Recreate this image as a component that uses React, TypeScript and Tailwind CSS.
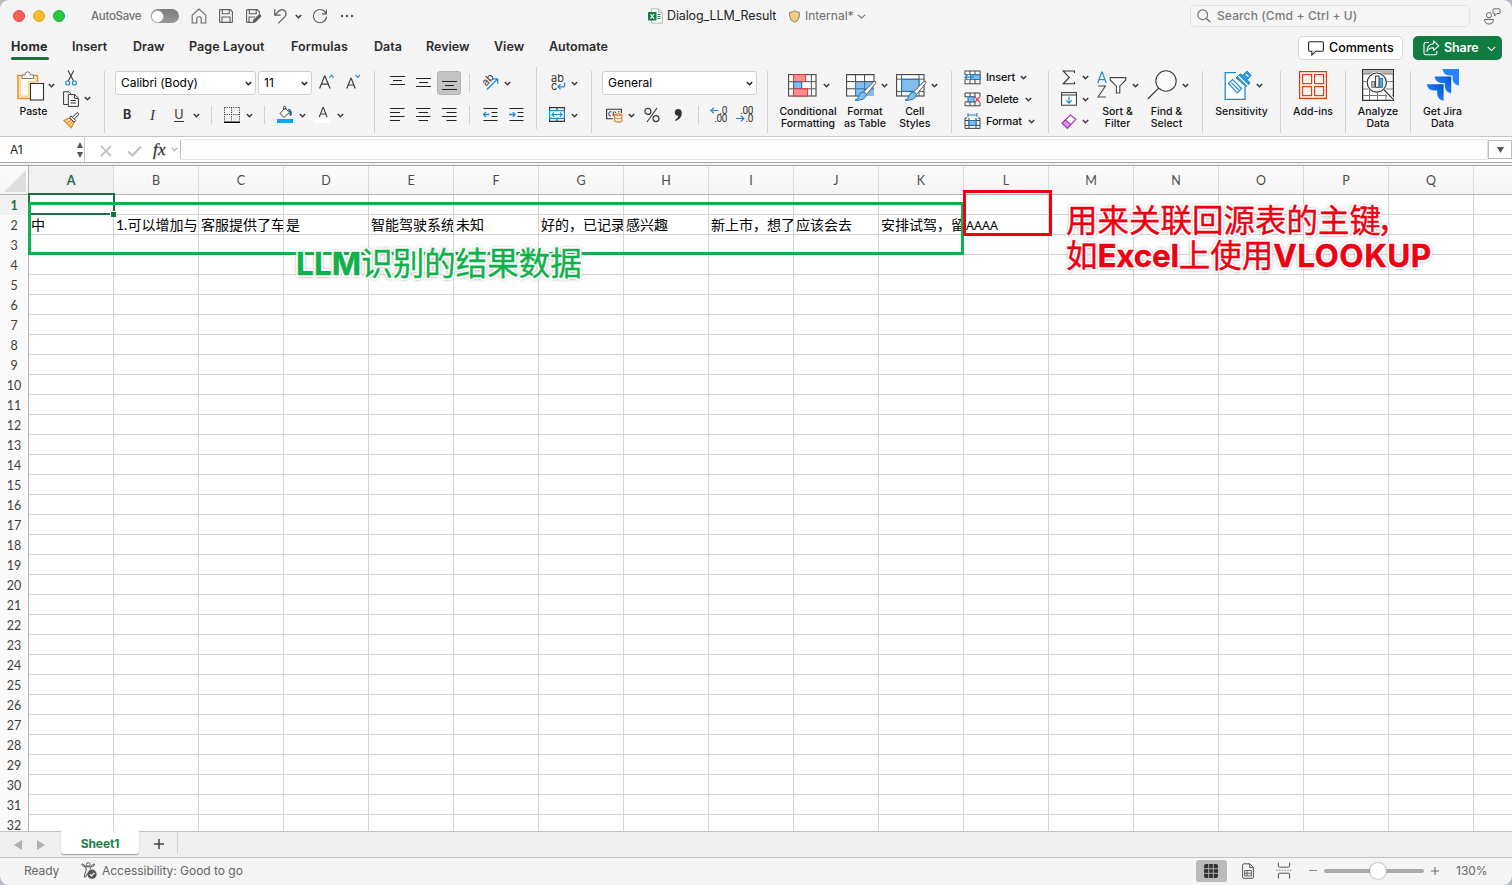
import React from "react";
import type { ReactNode } from "react";

const COLUMNS = "ABCDEFGHIJKLMNOPQ".split("");
const ROW_COUNT = 32;

const RECORD: Record<string, string> = {
  A: "中",
  B: "1.可以增加与",
  C: "客服提供了车",
  D: "是",
  E: "智能驾驶系统",
  F: "未知",
  G: "好的，已记录",
  H: "感兴趣",
  I: "新上市，想了",
  J: "应该会去",
  K: "安排试驾，留",
  L: "AAAA",
};

const INK = "#3b3b3b";
const BLUE = "#1e8ad2";

function Chevron({ className = "", color = "#3a3a3a" }: { className?: string; color?: string }) {
  return (
    <svg className={`shrink-0 ${className}`} width="7" height="5" viewBox="0 0 7 5" fill="none">
      <path d="M0.8 0.9L3.5 3.7L6.2 0.9" stroke={color} strokeWidth="1.5" />
    </svg>
  );
}

function Icon({
  w,
  h,
  className = "",
  children,
}: {
  w: number;
  h: number;
  className?: string;
  children: ReactNode;
}) {
  return (
    <svg
      className={`shrink-0 ${className}`}
      width={w}
      height={h}
      viewBox={`0 0 ${w} ${h}`}
      fill="none"
      stroke={INK}
      strokeWidth="1"
    >
      {children}
    </svg>
  );
}

function Divider({ className = "" }: { className?: string }) {
  return <div className={`w-px shrink-0 bg-[#d0d0d0] ${className}`} />;
}

function TitleBar() {
  return (
    <div className="flex h-8 shrink-0 items-center">
      <div className="ml-[13px] flex gap-2">
        <div className="size-3 rounded-full border border-[#e2463f] bg-[#ff5f57]" />
        <div className="size-3 rounded-full border border-[#e0a020] bg-[#febc2e]" />
        <div className="size-3 rounded-full border border-[#1dac2c] bg-[#28c840]" />
      </div>
      <div className="ml-[26px] w-[60px] pt-px text-[11.5px] font-medium tracking-[-0.32px] whitespace-nowrap text-[#717171]">AutoSave</div>
      <div className="flex h-[14px] w-7 items-center rounded-full bg-gradient-to-b from-[#7d7d7d] to-[#969696]">
        <div className="size-[13px] rounded-full border border-[#aaa] bg-white" />
      </div>
      <Icon w={16} h={16} className="ml-3">
        <path d="M1.2 7.2L8 1L14.8 7.2V15H10.2V10.5Q10.2 8.8 8 8.8Q5.8 8.8 5.8 10.5V15H1.2Z" stroke="#666" strokeWidth="1.1" />
      </Icon>
      <Icon w={14} h={14} className="ml-3">
        <path d="M0.6 1.6Q0.6 0.6 1.6 0.6H11.2L13.4 2.8V12.4Q13.4 13.4 12.4 13.4H1.6Q0.6 13.4 0.6 12.4ZM3.3 0.6V4.8H10.2V0.6M3 13.4V8H11V13.4" stroke="#5c5c5c" strokeWidth="1.1" />
      </Icon>
      <Icon w={16} h={16} className="ml-[13px]">
        <path d="M6 14.4H1.6Q0.6 14.4 0.6 13.4V2.6Q0.6 1.6 1.6 1.6H11.2L13.4 3.8V6M3.3 1.6V5.8H10.2V1.6M3 14.4V9H9" stroke="#5c5c5c" strokeWidth="1.1" />
        <path d="M6.3 15.5L7.2 11.8L12.7 6.4Q14 5.7 15 6.9Q15.7 8 14.9 8.9L9.6 14.3Z" fill="#5c5c5c" stroke="none" />
      </Icon>
      <Icon w={15} h={16} className="ml-[11px]">
        <path d="M1.7 1.2V7.2H7.7M1.9 7L6.2 2.8Q9 0.4 11.8 2.8Q14.3 5.6 11.8 8.8L5.2 15.4" stroke="#5c5c5c" strokeWidth="1.2" />
      </Icon>
      <Chevron className="ml-[7px]" />
      <Icon w={16} h={16} className="ml-[10px]">
        <path d="M14.2 5.8A6.6 6.6 0 1 0 14.6 8.6M14.4 1.6V5.9H10" stroke="#5c5c5c" strokeWidth="1.1" />
      </Icon>
      <Icon w={14} h={4} className="ml-3">
        <circle cx="2" cy="2" r="1.2" fill="#555" stroke="none" />
        <circle cx="7" cy="2" r="1.2" fill="#555" stroke="none" />
        <circle cx="12" cy="2" r="1.2" fill="#555" stroke="none" />
      </Icon>

      <Icon w={15} h={16} className="ml-[294px]">
        <path d="M3.5 0.8H10.5L14.3 4.6V15.2H3.5Z" fill="#fff" stroke="#b5b5b5" />
        <path d="M10.5 0.8V4.6H14.3" stroke="#b5b5b5" />
        <path d="M9.5 6.5H12.5M9.5 8.5H12.5M9.5 10.5H12.5" stroke="#1f9254" strokeWidth="1.2" />
        <rect x="0" y="4" width="8.5" height="8.5" rx="0.8" fill="#107c41" stroke="none" />
        <path d="M2.4 6L6 10.6M6 6L2.4 10.6" stroke="#fff" strokeWidth="1.2" />
      </Icon>
      <div className="ml-[4px] w-[122px] text-[12.5px] tracking-[-0.12px] whitespace-nowrap text-[#222]">Dialog_LLM_Result</div>
      <Icon w={11} h={13}>
        <path d="M5.5 0.8Q7.5 2.3 10.3 2.3V6.2Q10.3 10.2 5.5 12.3Q0.7 10.2 0.7 6.2V2.3Q3.5 2.3 5.5 0.8Z" fill="#f0cd86" stroke="#8b7d61" />
      </Icon>
      <div className="ml-[5px] w-[51.5px] text-[12px] whitespace-nowrap text-[#6b6b6b]">Internal*</div>
      <Icon w={9} h={5}>
        <path d="M0.8 0.8L4.5 4L8.2 0.8" stroke="#777" strokeWidth="1.1" />
      </Icon>

      <div className="ml-auto flex h-[22px] w-[280px] items-center rounded-[5px] border border-[#e2e2e2] bg-[#f6f6f6]">
        <Icon w={14} h={14} className="ml-[6px]">
          <circle cx="5.7" cy="5.7" r="4.9" stroke="#777" strokeWidth="1.2" />
          <path d="M9.3 9.3L13.3 13.3" stroke="#777" strokeWidth="1.5" />
        </Icon>
        <div className="ml-[6px] text-[12px] font-medium tracking-[0.12px] text-[#7b7b7b]">Search (Cmd + Ctrl + U)</div>
      </div>
      <Icon w={17} h={17} className="mr-[11px] ml-[14px]">
        <circle cx="5" cy="7.2" r="2.6" stroke="#666" />
        <path d="M0.6 11.5H9.4Q9.4 16 5 16Q0.6 16 0.6 11.5Z" stroke="#666" strokeLinejoin="round" />
        <path d="M9 1.6Q9 0.8 9.8 0.8H15.2Q16 0.8 16 1.6V4.7Q16 5.5 15.2 5.5H13L10.6 8V5.5H9.8Q9 5.5 9 4.7Z" stroke="#666" />
      </Icon>
    </div>
  );
}

function MenuTabs() {
  return (
    <div className="flex h-8 shrink-0 text-[12.5px] font-semibold text-[#2b2b2b]">
      <div className="ml-[11px] flex w-[61px] flex-col font-bold">
        <div className="mt-[5px] h-[20px] leading-[20px] tracking-[0.2px]">Home</div>
        <div className="h-[3px] w-[38px] rounded-full bg-[#1d6f42]" />
      </div>
      <div className="flex pt-[5px] leading-[20px] tracking-[0.02px] whitespace-nowrap">
        <div className="w-[61px]">Insert</div>
        <div className="w-[56px]">Draw</div>
        <div className="w-[102px] tracking-[0.12px]">Page Layout</div>
        <div className="w-[83px] tracking-[0.15px]">Formulas</div>
        <div className="w-[52px]">Data</div>
        <div className="w-[68px]">Review</div>
        <div className="w-[55px]">View</div>
        <div>Automate</div>
      </div>
      <div className="mt-[4px] ml-auto flex h-6 w-[105px] items-center rounded-[5px] border border-[#d8d8d8] bg-white font-medium text-black">
        <Icon w={16} h={15} className="ml-[9px]">
          <path d="M1.8 0.8H14.2Q15.4 0.8 15.4 2V9Q15.4 10.2 14.2 10.2H7.8L3.8 14V10.2H1.8Q0.6 10.2 0.6 9V2Q0.6 0.8 1.8 0.8Z" stroke="#222" strokeWidth="1.1" />
        </Icon>
        <div className="ml-[5px] pt-px">Comments</div>
      </div>
      <div className="mt-[4px] mr-[10px] ml-[10px] flex h-6 w-[89px] items-center rounded-[5px] bg-[#107c41] text-white">
        <Icon w={17} h={16} className="ml-[10px]">
          <path d="M6 2.5H2.8Q1 2.5 1 4.3V13Q1 14.8 2.8 14.8H12Q13.8 14.8 13.8 13V11" stroke="#fff" strokeWidth="1.1" />
          <path d="M10.6 1L15.8 5.8L10.6 10.4V7.8Q6 7.6 4 11.4Q4.2 4.2 10.6 3.8Z" stroke="#fff" strokeWidth="1.1" strokeLinejoin="round" />
        </Icon>
        <div className="ml-[4px] w-[43px] pt-px tracking-[-0.1px]">Share</div>
        <Icon w={9} h={6} className="mt-px">
          <path d="M0.8 1L4.5 4.6L8.2 1" stroke="#fff" strokeWidth="1.1" />
        </Icon>
      </div>
    </div>
  );
}

function ClipboardGroup() {
  return (
    <div className="flex w-[104px] shrink-0">
      <div className="ml-[17px] flex w-[46px] flex-col pt-[7px]">
        <div className="flex items-center">
          <Icon w={28} h={30}>
            <path d="M6 4.5H1V27.5H13" stroke="#e8912d" strokeWidth="1.6" />
            <path d="M14.5 4.5H20.5V11" stroke="#e8912d" strokeWidth="1.6" />
            <path d="M3 6.5V25.5H12V11H18.5V6.5" fill="#fbfbf6" stroke="#fbd99a" strokeWidth="2" />
            <path d="M5 7.5V4H8Q8 0.8 10.7 0.8Q13.4 0.8 13.4 4H16.5V7.5Z" fill="#fff" stroke="#777" />
            <rect x="13.5" y="12.5" width="13" height="16.5" fill="#fff" stroke="#333" strokeWidth="1.1" />
          </Icon>
          <Chevron className="-mt-[2px] ml-[3px]" />
        </div>
        <div className="mt-[4px] ml-[2.5px] text-[10.5px] leading-[14px] font-medium tracking-[-0.02px] text-[#111]">Paste</div>
      </div>
      <div className="flex flex-col pt-[6px]">
        <Icon w={16} h={16}>
          <path d="M5 0.5L10.6 11M10.8 0.5L5.2 11" strokeWidth="1.1" />
          <circle cx="4.6" cy="13" r="2" stroke={BLUE} strokeWidth="1.2" />
          <circle cx="11.4" cy="13" r="2" stroke={BLUE} strokeWidth="1.2" />
        </Icon>
        <div className="mt-[4px] flex h-[17px] items-center">
          <Icon w={16} h={16}>
            <path d="M4.8 13.5H0.6V0.8H6L8.2 3" stroke="#333" />
            <path d="M5.3 3.6H11.8L15.4 7.2V15.4H5.3Z" fill="#fff" stroke="#333" />
            <path d="M11.6 3.6V7.4H15.4M7.6 9.5H13M7.6 12H13" stroke="#333" />
          </Icon>
          <Chevron className="ml-[5px]" />
        </div>
        <Icon w={17} h={17} className="mt-[5px]">
          <path d="M1 8.5L6.8 5.8L11 10.2L8.3 15.6Z" fill="#fbdcae" stroke="#e8821e" strokeWidth="1.3" />
          <path d="M4 11L8 8.5M6.3 13L9.5 9.5" stroke="#e8821e" strokeWidth="0.9" />
          <path d="M6.8 5.8L8.2 3.9L12.6 8.4L11 10.2Z" fill="#fff" stroke="#333" />
          <path d="M9.7 4.8L13.9 0.9Q15.2 0.5 15.6 1.7Q15.9 2.6 15.2 3L11.4 6.8" fill="#fff" stroke="#333" />
        </Icon>
      </div>
    </div>
  );
}

function FontGroup() {
  return (
    <div className="flex w-[269px] shrink-0 flex-col pt-[3px]">
      <div className="flex h-8 items-center">
        <div className="ml-[10px] flex h-6 w-[141px] items-center rounded-[3px] border border-[#d0d0d0] bg-white">
          <div className="ml-[5px] w-[124px] text-[12px] tracking-[-0.05px] text-black">Calibri (Body)</div>
          <Chevron color="#222" />
        </div>
        <div className="ml-[2px] flex h-6 w-[54px] items-center rounded-[3px] border border-[#d0d0d0] bg-white">
          <div className="ml-[5px] w-[37px] text-[12px] text-black">11</div>
          <Chevron color="#222" />
        </div>
        <Icon w={15} h={16} className="-mt-[2px] ml-[7px]">
          <path d="M0.6 14.5L5.6 2H6L11 14.5M2.4 10.2H9.2" strokeWidth="1.2" />
          <path d="M10.4 3.6L12.6 1.3L14.8 3.6" stroke={BLUE} strokeWidth="1.2" />
        </Icon>
        <Icon w={15} h={16} className="-mt-[2px] ml-[12px]">
          <path d="M0.8 14.5L4.8 4.3H5.2L9.2 14.5M2.2 11H7.8" strokeWidth="1.2" />
          <path d="M9.6 1.2L11.8 3.5L14 1.2" stroke={BLUE} strokeWidth="1.2" />
        </Icon>
      </div>
      <div className="flex h-8 items-center text-[#333]">
        <div className="ml-[18px] w-[26px] text-[12.5px] font-bold">B</div>
        <div className="w-[25px] pl-px font-['Liberation_Serif',serif] text-[15px] italic">I</div>
        <div className="flex w-[19px] flex-col items-start">
          <div className="h-[14px] w-[10px] border-b border-[#333] text-center text-[12.5px] leading-[13px]">U</div>
        </div>
        <Chevron />
        <Divider className="ml-[11px] h-[18px]" />
        <Icon w={16} h={16} className="ml-[12px]">
          <path d="M0.5 0.5H15.5M0.5 7.5H15.5M0.5 0.5V14M7.5 0.5V14M15.5 0.5V14" stroke="#222" strokeDasharray="1 1.2" />
          <path d="M0 15.2H16" stroke="#000" strokeWidth="1.4" />
        </Icon>
        <Chevron className="ml-[6px]" />
        <Divider className="ml-[11px] h-[18px]" />
        <Icon w={16} h={18} className="-mt-[2px] ml-[12px]">
          <path d="M3 8.5L8.2 3L12.3 7.6L7 12.4Z" fill="#fff" stroke="#444" />
          <path d="M6.6 5V2.4Q6.8 0.8 8 1.2Q9 1.6 9 5" stroke="#444" />
          <path d="M11 4.4Q14 4 14.4 7.5Q14.8 10 13.6 10.8Q12.6 10 12.9 7.5" fill="#1b5f9e" stroke="#1b5f9e" strokeWidth="0.8" />
          <rect x="0" y="14" width="16" height="4" fill="#00a9ee" stroke="none" />
        </Icon>
        <Chevron className="ml-[6px]" />
        <Icon w={16} h={18} className="-mt-[2px] ml-[9px]">
          <path d="M4.2 12L8 2.6H8.3L12.1 12M5.5 9H10.8" strokeWidth="1.1" />
          <rect x="0" y="14" width="16" height="4" fill="#fff" stroke="none" />
        </Icon>
        <Chevron className="ml-[6px]" />
      </div>
    </div>
  );
}

function AlignmentGroup() {
  return (
    <div className="flex w-[161px] shrink-0 flex-col pt-[3px]">
      <div className="flex h-8 items-center">
        <Icon w={15} h={14} className="-mt-[2px] ml-[15px]">
          <path d="M0 1.5H15M3 5.5H12M0 9.5H15" stroke="#222" strokeWidth="1.1" />
        </Icon>
        <Icon w={15} h={14} className="-mt-[2px] ml-[11px]">
          <path d="M0 3.5H15M3 7.5H12M0 11.5H15" stroke="#222" strokeWidth="1.1" />
        </Icon>
        <div className="ml-[6px] flex size-6 items-center justify-center rounded-[3px] border border-[#b3b3b3] bg-[#c4c4c4]">
          <Icon w={15} h={14}>
            <path d="M0 5.5H15M3 9.5H12M0 13.5H15" stroke="#222" strokeWidth="1.1" />
          </Icon>
        </div>
        <Divider className="ml-[8px] h-[18px]" />
        <div className="relative ml-[12px] h-[16px] w-[17px]">
          <div className="absolute top-[-2px] left-0 -rotate-45 text-[10.5px] leading-[14px] text-[#333]">ab</div>
          <Icon w={17} h={16} className="absolute inset-0">
            <path d="M5 14.5L15.5 4M10.8 3.8H15.7V8.7" stroke={BLUE} strokeWidth="1.2" />
          </Icon>
        </div>
        <Chevron className="ml-[5px]" />
      </div>
      <div className="flex h-8 items-center">
        <Icon w={15} h={14} className="ml-[15px]">
          <path d="M0 0.5H14.5M0 4.5H10M0 8.5H14.5M0 12.5H10" stroke="#222" strokeWidth="1.1" />
        </Icon>
        <Icon w={15} h={14} className="ml-[11px]">
          <path d="M0 0.5H14.5M2.5 4.5H12M0 8.5H14.5M2.5 12.5H12" stroke="#222" strokeWidth="1.1" />
        </Icon>
        <Icon w={15} h={14} className="ml-[11px]">
          <path d="M0 0.5H14.5M4.5 4.5H14.5M0 8.5H14.5M4.5 12.5H14.5" stroke="#222" strokeWidth="1.1" />
        </Icon>
        <Divider className="ml-[12px] h-[18px]" />
        <Icon w={15} h={14} className="ml-[13px]">
          <path d="M0.5 0.5H14.5M8.5 4.5H14.5M8.5 8.5H14.5M0.5 12.5H14.5" stroke="#222" strokeWidth="1.1" />
          <path d="M0.5 6.5H6.3M2.8 4.1L0.4 6.5L2.8 8.9" stroke={BLUE} strokeWidth="1.3" />
        </Icon>
        <Icon w={15} h={14} className="ml-[11px]">
          <path d="M0.5 0.5H14.5M8.5 4.5H14.5M8.5 8.5H14.5M0.5 12.5H14.5" stroke="#222" strokeWidth="1.1" />
          <path d="M0 6.5H6M3.8 4.1L6.2 6.5L3.8 8.9" stroke={BLUE} strokeWidth="1.3" />
        </Icon>
      </div>
    </div>
  );
}

function WrapGroup() {
  return (
    <div className="flex w-[54px] shrink-0 flex-col pt-[3px]">
      <div className="flex h-8 items-center">
        <div className="relative ml-[14px] h-[18px] w-[15px] text-[11px] text-[#333]">
          <div className="h-[8px] leading-[8px]">ab</div>
          <div className="h-[8px] leading-[8px]">c</div>
          <Icon w={9} h={9} className="absolute top-[8px] left-[6px]">
            <path d="M7.7 0.5V3.5Q7.7 4.8 6.4 4.8H1M3.6 2.2L1 4.8L3.6 7.4" stroke={BLUE} strokeWidth="1.2" />
          </Icon>
        </div>
        <Chevron className="ml-[5px]" />
      </div>
      <div className="flex h-8 items-center">
        <Icon w={16} h={15} className="-mt-px ml-[12px]">
          <path d="M0.6 4V0.6H15.4V4M0.6 11V14.4H15.4V11M8 0.6V3.5M8 11.5V14.4" stroke="#333" strokeWidth="1.1" />
          <rect x="0.6" y="3.6" width="14.8" height="7.8" fill="#eef7fd" stroke={BLUE} strokeWidth="1.2" />
          <path d="M3 7.5H13M5 5.4L2.9 7.5L5 9.6M11 5.4L13.1 7.5L11 9.6" stroke={BLUE} strokeWidth="1.1" />
        </Icon>
        <Chevron className="ml-[6px]" />
      </div>
    </div>
  );
}

function NumberGroup() {
  return (
    <div className="flex w-[175px] shrink-0 flex-col pt-[3px]">
      <div className="flex h-8 items-center">
        <div className="ml-[10px] flex h-6 w-[155px] items-center rounded-[3px] border border-[#d0d0d0] bg-white">
          <div className="ml-[5px] w-[138px] text-[12px] text-black">General</div>
          <Chevron color="#222" />
        </div>
      </div>
      <div className="flex h-8 items-center">
        <Icon w={17} h={15} className="mt-px ml-[14px]">
          <path d="M7 10.8H0.6V1.2H15.4V5" stroke="#333" strokeWidth="1.1" />
          <path d="M5.6 3.8H4Q2.8 3.8 2.8 5.8Q2.8 8 4 8H5M7.2 8V5Q7.2 3.8 8.5 3.8Q9.8 3.8 9.8 5M12 3.8H13.4" stroke="#333" />
          <path d="M8.6 6.6Q12.2 5 15.9 6.6V13Q12.2 15.4 8.6 13Z" fill="#fff" stroke="#ed7d31" strokeWidth="1.2" />
          <path d="M8.6 7Q12.2 8.8 15.9 7M8.6 10Q12.2 11.8 15.9 10" stroke="#ed7d31" />
        </Icon>
        <Chevron className="ml-[5px]" />
        <Icon w={16} h={16} className="ml-[9px]">
          <circle cx="3.9" cy="4.4" r="3" strokeWidth="1.2" />
          <circle cx="12" cy="11.6" r="3" strokeWidth="1.2" />
          <path d="M13 1L3 15" strokeWidth="1.2" />
        </Icon>
        <Icon w={9} h={14} className="ml-[14px]">
          <path d="M4 1Q7.8 1 7.8 5Q7.8 10.5 1.6 13L1 12Q4.2 10.3 4.6 7.6Q1 8 0.8 4.4Q1 1.2 4 1Z" fill="#333" stroke="none" />
        </Icon>
        <Divider className="ml-[15px] h-[18px]" />
        <div className="relative ml-[11px] h-[16px] w-[17px] text-right font-['Roboto',sans-serif] text-[10px] leading-[8px] tracking-[-0.4px] text-[#333]">
          <div>.0</div>
          <div>.00</div>
          <Icon w={9} h={7} className="absolute top-0 left-0">
            <path d="M1 3.5H8.5M3.8 0.8L1 3.5L3.8 6.2" stroke={BLUE} strokeWidth="1.2" />
          </Icon>
        </div>
        <div className="relative ml-[9px] h-[16px] w-[17px] text-right font-['Roboto',sans-serif] text-[10px] leading-[8px] tracking-[-0.4px] text-[#333]">
          <div>.00</div>
          <div>.0</div>
          <Icon w={9} h={7} className="absolute top-[8px] left-0">
            <path d="M0 3.5H7.8M5 0.8L7.8 3.5L5 6.2" stroke={BLUE} strokeWidth="1.2" />
          </Icon>
        </div>
      </div>
    </div>
  );
}

function BigButton({
  className,
  iconRow,
  lines,
}: {
  className: string;
  iconRow: ReactNode;
  lines: string[];
}) {
  return (
    <div className={`flex shrink-0 flex-col items-center ${className}`}>
      <div className="flex h-[42px] items-center">{iconRow}</div>
      <div className="text-center text-[10.5px] leading-[12px] font-medium tracking-[0.02px] whitespace-nowrap text-[#111]">
        {lines.map((line) => (
          <div key={line}>{line}</div>
        ))}
      </div>
    </div>
  );
}

function StylesGroup() {
  const brush = (
    <>
      <path d="M29.2 7.2Q30.6 8 29.8 9.2L20.4 20.6L17.4 18L28 7.4Z" fill="#fff" stroke="#555" />
      <path d="M17.2 18Q20 18.4 20.4 20.8Q19.6 26.4 9 26.4Q12.4 25 13 21.6Q14 18.2 17.2 18Z" fill="#83bdec" stroke="#1f75bd" />
    </>
  );
  return (
    <div className="flex w-[183px] shrink-0">
      <BigButton
        className="ml-[7.5px] w-[65px]"
        lines={["Conditional", "Formatting"]}
        iconRow={
          <>
            <Icon w={29} h={23} className="ml-[2px]">
              <rect x="0.6" y="0.6" width="27.4" height="21.4" fill="#fff" stroke="#444" strokeWidth="1.1" />
              <path d="M0.6 7.6H28M0.6 14.8H28M5.6 0.6V22M13.6 7V15M23.4 0.6V22" stroke="#555" />
              <rect x="5.6" y="0.6" width="12" height="7" fill="#ff8f95" stroke="#e23a3a" strokeWidth="1.1" />
              <rect x="5.6" y="7.8" width="8" height="6.8" fill="#83bdec" stroke="#1f75bd" strokeWidth="1.1" />
              <rect x="5.6" y="14.8" width="14" height="7.2" fill="#ff8f95" stroke="#e23a3a" strokeWidth="1.1" />
            </Icon>
            <Chevron className="ml-[6px]" />
          </>
        }
      />
      <BigButton
        className="w-[49px]"
        lines={["Format", "as Table"]}
        iconRow={
          <>
            <Icon w={31} h={28} className="mt-[5px] ml-[3px]">
              <rect x="0.6" y="0.6" width="27.4" height="21.4" fill="#fff" stroke="none" />
              <rect x="9.6" y="7.6" width="18.4" height="14.4" fill="#83bdec" stroke="none" />
              <path d="M0.6 7.6H28M0.6 14.8H9.6M9.6 0.6V7.6M18.6 0.6V7.6" stroke="#444" />
              <path d="M9.6 14.8H28M18.6 7.6V22M9.6 7.6V22" stroke="#1f75bd" />
              <path d="M28 9V0.6H0.6V22H12" stroke="#444" strokeWidth="1.1" />
              {brush}
            </Icon>
            <Chevron className="ml-[4px]" />
          </>
        }
      />
      <BigButton
        className="w-[50.5px]"
        lines={["Cell", "Styles"]}
        iconRow={
          <>
            <Icon w={31} h={28} className="mt-[5px] ml-[4px]">
              <rect x="0.6" y="0.6" width="27.4" height="21.4" fill="#fff" stroke="#444" strokeWidth="1.1" />
              <path d="M0.6 5.2H28M5.6 0.6V22M23 0.6V22M0.6 17.6H28" stroke="#555" />
              <rect x="5.6" y="5.4" width="17.4" height="12" fill="#83bdec" stroke="#1f75bd" strokeWidth="1.1" />
              {brush}
            </Icon>
            <Chevron className="ml-[4px]" />
          </>
        }
      />
    </div>
  );
}

function CellsGroup() {
  const label = "ml-[5px] text-[11px] font-medium tracking-[-0.18px] text-[#111]";
  return (
    <div className="flex w-[96px] shrink-0 flex-col pt-[2px] pl-[12px]">
      <div className="flex h-[22px] items-center">
        <Icon w={17} h={15}>
          <rect x="1" y="1" width="15" height="12.8" fill="#fff" stroke="#444" />
          <path d="M6 1V5M11 1V14M6 9.5V14M1 9.5H16M1 4.8H16" stroke="#444" />
          <rect x="6.5" y="4.8" width="9.5" height="4.8" fill="#83bdec" stroke="#1f75bd" />
          <rect x="0" y="5" width="6" height="4.4" fill="#f5f5f5" stroke="none" />
          <path d="M1 7.2H10M3.8 4.4L1 7.2L3.8 10" stroke={BLUE} strokeWidth="1.3" />
        </Icon>
        <div className={label}>Insert</div>
        <Chevron className="ml-[5px]" />
      </div>
      <div className="flex h-[22px] items-center">
        <Icon w={17} h={15}>
          <path d="M1 5V1H16V4.5M1 10V13.8H16V10.5M6 1V5M11 1V5M6 10V14M11 10V14M1 4.8H11M1 9.8H11" stroke="#444" />
          <rect x="4" y="4.8" width="6" height="5" fill="#83bdec" stroke="#1f75bd" />
          <path d="M10.8 4.6L15.8 10.4M15.8 4.6L10.8 10.4" stroke="#e03a3a" strokeWidth="1.3" />
        </Icon>
        <div className={label}>Delete</div>
        <Chevron className="ml-[6px]" />
      </div>
      <div className="flex h-[22px] items-center">
        <Icon w={17} h={16}>
          <path d="M4 0V4M13 0V4M4 2H13" stroke={BLUE} strokeWidth="1.1" />
          <path d="M3 5H1V15.4H16V5H14M1 7.5H16M1 12.4H16M5 5V15.4M12 5V15.4" stroke="#444" />
          <rect x="5" y="7.5" width="7" height="4.9" fill="#83bdec" stroke="#1f75bd" />
        </Icon>
        <div className={label}>Format</div>
        <Chevron className="ml-[6px]" />
      </div>
    </div>
  );
}

function EditingGroup() {
  return (
    <div className="flex w-[153px] shrink-0">
      <div className="flex w-[43px] flex-col pt-[2px] pl-[12px]">
        <div className="flex h-[22px] items-center">
          <Icon w={16} h={15}>
            <path d="M13.5 3V1H2.2L8.2 7.4L2.2 13.8H13.5V11.8" stroke="#333" strokeWidth="1.1" />
          </Icon>
          <Chevron className="ml-[5px]" />
        </div>
        <div className="flex h-[22px] items-center">
          <Icon w={16} h={14}>
            <rect x="0.6" y="0.6" width="14.8" height="12.6" fill="#fff" stroke="#333" />
            <path d="M0.6 3H15.4" stroke="#333" />
            <path d="M8 4.5V11M5.2 8.4L8 11.2L10.8 8.4" stroke={BLUE} strokeWidth="1.2" />
          </Icon>
          <Chevron className="ml-[5px]" />
        </div>
        <div className="flex h-[22px] items-center">
          <Icon w={16} h={15}>
            <path d="M1.2 9.2L9.4 1L14.8 5.4L6.4 14.2Z" fill="#fff" stroke="#9b3bb0" strokeWidth="1.2" />
            <path d="M1.2 9.2L4.4 6L9.8 10.6L6.4 14.2Z" fill="#d79be3" stroke="#9b3bb0" strokeWidth="1.1" />
          </Icon>
          <Chevron className="ml-[5px]" />
        </div>
      </div>
      <BigButton
        className="w-[51px]"
        lines={["Sort &", "Filter"]}
        iconRow={
          <>
            <Icon w={30} h={28} className="ml-[1px]">
              <path d="M0.8 12L4.8 1H5.2L9.2 12M2.2 8.6H7.8" stroke={BLUE} strokeWidth="1.2" />
              <path d="M1.2 15H8.4L1 26H8.8" stroke="#444" strokeWidth="1.1" />
              <path d="M13.2 6.6H28.8V9L22.8 15.2V22H19.4V15.2L13.2 9Z" fill="#fff" stroke="#444" strokeWidth="1.1" />
            </Icon>
            <Chevron className="ml-[5px]" />
          </>
        }
      />
      <BigButton
        className="w-[47px]"
        lines={["Find &", "Select"]}
        iconRow={
          <>
            <Icon w={30} h={30} className="ml-[3px]">
              <circle cx="19" cy="11" r="10.2" fill="#fbfbfb" strokeWidth="1.1" />
              <path d="M11.6 18.2L0.8 29" strokeWidth="1.2" />
            </Icon>
            <Chevron className="ml-[5px]" />
          </>
        }
      />
    </div>
  );
}

function Ribbon() {
  const sep = "mt-[7px] h-[62px]";
  return (
    <div className="flex h-[73px] shrink-0 border-b border-[#c6c6c6]">
      <ClipboardGroup />
      <Divider className={sep} />
      <FontGroup />
      <Divider className={sep} />
      <AlignmentGroup />
      <Divider className="mt-[3px] h-[62px]" />
      <WrapGroup />
      <Divider className={sep} />
      <NumberGroup />
      <Divider className={sep} />
      <StylesGroup />
      <Divider className={sep} />
      <CellsGroup />
      <Divider className={sep} />
      <EditingGroup />
      <Divider className={sep} />
      <BigButton
        className="w-[77px]"
        lines={["Sensitivity"]}
        iconRow={
          <>
            <Icon w={28} h={31} className="ml-[3px]">
              <path d="M12 2.6H1.2V29.4H21V16.5" fill="#fff" stroke={BLUE} strokeWidth="1.3" />
              <path d="M4.5 13.5L8.5 9.6L17.6 18.6L13.2 22.8Z" fill="#fff" stroke={BLUE} strokeWidth="1.2" />
              <path d="M7.5 12.6L14.8 20" stroke={BLUE} strokeWidth="1.1" />
              <path d="M12 8L16.2 3.8L18.6 5.4L23 1L27.2 5.4L23 9.8L26.2 13L22.2 16.6Z" fill="#2f97dc" stroke={BLUE} />
              <path d="M14.3 6L24 15.5M21.8 4L24.4 6.6" stroke="#fff" strokeWidth="1.2" />
            </Icon>
            <Chevron className="ml-[4px]" />
          </>
        }
      />
      <Divider className={sep} />
      <BigButton
        className="w-[64px]"
        lines={["Add-ins"]}
        iconRow={
          <Icon w={28} h={28}>
            <rect x="0.6" y="0.6" width="26.8" height="26.8" stroke="#d83b01" strokeWidth="1.2" />
            <rect x="3.6" y="3.6" width="9" height="9" stroke="#d83b01" strokeWidth="1.1" />
            <rect x="15.6" y="3.6" width="9" height="9" stroke="#d83b01" strokeWidth="1.1" />
            <rect x="3.6" y="15.6" width="9" height="9" stroke="#d83b01" strokeWidth="1.1" />
            <rect x="15.6" y="15.6" width="9" height="9" stroke="#d83b01" strokeWidth="1.1" />
          </Icon>
        }
      />
      <Divider className={sep} />
      <BigButton
        className="w-[64px]"
        lines={["Analyze", "Data"]}
        iconRow={
          <Icon w={32} h={32}>
            <rect x="0.6" y="0.6" width="30.8" height="30.8" fill="#fff" stroke="#333" strokeWidth="1.3" />
            <rect x="1.2" y="1.2" width="29.6" height="3.8" fill="#b8b8b8" stroke="none" />
            <path d="M1 5H31M1 12.5H31M1 20H31M1 26.5H31M7.5 20V31M15.5 20V31M24 24V31" stroke="#777" />
            <circle cx="14.8" cy="13.6" r="10.6" fill="#fff" stroke="none" />
            <circle cx="14.8" cy="13.6" r="9.6" fill="#fff" stroke="#333" strokeWidth="1.2" />
            <rect x="9.6" y="12.5" width="3" height="5.8" fill="#bbb" stroke="#777" />
            <rect x="13.6" y="7" width="3.4" height="11.3" fill="#fff" stroke="#333" />
            <rect x="17.6" y="9.4" width="3" height="8.9" fill="#5aa7e4" stroke="#1f75bd" />
            <path d="M21.8 20.6L31.2 30.2" stroke="#fff" strokeWidth="3.4" />
            <path d="M21.6 20.4L31.4 30.4" stroke="#333" strokeWidth="1.3" />
          </Icon>
        }
      />
      <Divider className={sep} />
      <BigButton
        className="w-[63px]"
        lines={["Get Jira", "Data"]}
        iconRow={
          <Icon w={32} h={32}>
            <defs>
              <linearGradient id="jiraFold" x1="1" y1="0" x2="0.3" y2="0.7">
                <stop offset="0" stopColor="#0050cc" />
                <stop offset="1" stopColor="#2684ff" />
              </linearGradient>
            </defs>
            <path d="M15.4 0H32V16.6Q26.4 15.4 25.6 10.4V6.4H21.8Q16 5.6 15.4 0Z" fill="#2684ff" stroke="none" />
            <path d="M7.6 7.6H24.2V24.2Q18.6 23.2 17.8 18V14H14Q8.4 13.2 7.6 7.6Z" fill="url(#jiraFold)" stroke="none" />
            <path d="M0 15.2H16.6V31.8Q11 30.8 10.2 25.6V21.6H6.4Q0.6 20.8 0 15.2Z" fill="url(#jiraFold)" stroke="none" />
          </Icon>
        }
      />
    </div>
  );
}

function FormulaBar() {
  return (
    <div className="flex h-[29px] shrink-0 flex-col bg-white">
      <div className="flex h-[26px] items-center border-b border-[#a8a8a8]">
        <div className="flex h-full w-[85px] items-center border-r border-[#c4c4c4]">
          <div className="ml-[10px] w-[66px] text-[12px] tracking-[-0.1px] text-[#222]">A1</div>
          <Icon w={8} h={18}>
            <path d="M4 1L7 7H1ZM4 17L7 11H1Z" fill="#555" stroke="none" />
          </Icon>
        </div>
        <Icon w={12} h={12} className="mt-[2px] ml-[15px]">
          <path d="M1 1L11 11M11 1L1 11" stroke="#c4c4c4" strokeWidth="1.8" />
        </Icon>
        <Icon w={15} h={12} className="mt-[2px] ml-[15px]">
          <path d="M1 6.2L5.4 10.6L14 1.6" stroke="#c4c4c4" strokeWidth="2.2" />
        </Icon>
        <div className="ml-[11px] w-[18px] font-['Liberation_Serif',serif] text-[17px] leading-[20px] tracking-[0.2px] text-[#333] italic [-webkit-text-stroke:0.3px_#333]">fx</div>
        <Chevron color="#bbb" />
        <div className="ml-[2px] flex h-[21px] grow rounded-[2px] border border-[#e3e3e3] border-l-[#c0c0c0] bg-[#fdfdfd]" />
        <div className="flex h-[19px] w-[24px] items-center justify-center border border-[#bdbdbd] bg-white">
          <Icon w={7} h={6}>
            <path d="M0 0H7L3.5 6Z" fill="#555" stroke="none" />
          </Icon>
        </div>
      </div>
      <div className="h-[2px] bg-[#f2f2f2]" />
      <div className="h-px bg-[#a8a8a8]" />
    </div>
  );
}

function ColumnHeaders() {
  return (
    <div className="flex h-[29px] shrink-0 border-b border-[#b4b4b4] bg-gradient-to-b from-[#fcfcfc] to-[#f5f5f5] font-['Lato',sans-serif] text-[12.5px] text-[#4d4d4d]">
      <div className="flex w-[29px] shrink-0 items-end justify-end border-r border-[#b4b4b4] pr-[2px] pb-[2px]">
        <Icon w={22} h={22}>
          <path d="M22 0V22H0Z" fill="#dedede" stroke="none" />
        </Icon>
      </div>
      {COLUMNS.map((name) => (
        <div
          key={name}
          className={
            name === "A"
              ? "flex w-[85px] shrink-0 items-center justify-center border-r border-[#dcdcdc] bg-[#f1f1f1] pt-[2px] font-bold text-[#1d6f42]"
              : "flex w-[85px] shrink-0 items-center justify-center border-r border-[#dcdcdc] pt-[2px]"
          }
        >
          {name}
        </div>
      ))}
    </div>
  );
}

function SheetRow({ index }: { index: number }) {
  return (
    <div className="flex h-5 shrink-0">
      <div
        className={
          index === 1
            ? "flex w-[29px] shrink-0 items-center justify-center border-r border-[#b4b4b4] bg-[#f1f1f1] pt-[2px] font-['Lato',sans-serif] text-[12.5px] font-bold text-[#1d6f42]"
            : "flex w-[29px] shrink-0 items-center justify-center border-r border-[#b4b4b4] bg-[#fafafa] pt-[2px] font-['Lato',sans-serif] text-[12.5px] text-[#3f3f3f]"
        }
      >
        {index}
      </div>
      {COLUMNS.map((name) => {
        const text = index === 2 ? RECORD[name] : undefined;
        return (
          <div
            key={name}
            className="w-[85px] shrink-0 overflow-hidden border-r border-b border-[#d4d4d4] pl-[2px] font-['Lato','Noto_Sans_CJK_SC',sans-serif] text-[14px] leading-[19px] whitespace-nowrap text-black"
          >
            {name === "L" && text ? (
              <span className="font-['Noto_Sans',sans-serif] text-[12.5px]">{text}</span>
            ) : (
              text
            )}
          </div>
        );
      })}
      <div className="grow border-b border-[#d4d4d4]" />
    </div>
  );
}

function Annotations() {
  return (
    <>
      <div className="absolute top-[193px] left-[28px] h-[22px] w-[87px] border-2 border-[#1d6f42]" />
      <div className="absolute top-[211px] left-[110px] size-[6px] border-t border-l border-white bg-[#1d6f42]" />
      <div className="absolute top-[202px] left-[28px] h-[53px] w-[936px] border-[3px] border-[#10b04a]" />
      <div className="absolute top-[190px] left-[963px] h-[46px] w-[89px] border-[3px] border-[#ee0012]" />
      <div className="absolute top-[246px] left-[296px] text-[31.5px] leading-[36px] whitespace-nowrap text-[#10b04a] [-webkit-text-stroke:0.4px_#10b04a] [text-shadow:-2px_0_0_#fff,2px_0_0_#fff,0_-2px_0_#fff,0_2px_0_#fff,-1.5px_-1.5px_0_#fff,1.5px_1.5px_0_#fff,-1.5px_1.5px_0_#fff,1.5px_-1.5px_0_#fff,0_0_4px_#555,0_1px_3px_#777]">
        <b className="tracking-[0.1px]">LLM</b>
        <span>识别的结果数据</span>
      </div>
      <div className="absolute top-[203px] left-[1066px] text-[31.5px] leading-[36px] whitespace-nowrap text-[#ee0012] [-webkit-text-stroke:0.4px_#ee0012] [text-shadow:-2px_0_0_#fff,2px_0_0_#fff,0_-2px_0_#fff,0_2px_0_#fff,-1.5px_-1.5px_0_#fff,1.5px_1.5px_0_#fff,-1.5px_1.5px_0_#fff,1.5px_-1.5px_0_#fff,0_0_4px_#555,0_1px_3px_#777]">
        <div>
          用来关联回源表的主键<span className="-ml-[4px]">，</span>
        </div>
        <div className="-mt-px">
          如<b className="tracking-[-0.3px]">Excel</b>上使用<b className="tracking-[0.5px]">VLOOKUP</b>
        </div>
      </div>
    </>
  );
}

function SheetTabs() {
  return (
    <div className="flex h-[27px] shrink-0 border-t border-b border-[#c2c2c2] bg-[#efefef]">
      <Icon w={8} h={10} className="mt-[8px] ml-[14px]">
        <path d="M8 0V10L0 5Z" fill="#b0b0b0" stroke="none" />
      </Icon>
      <Icon w={8} h={10} className="mt-[8px] ml-[15px]">
        <path d="M0 0V10L8 5Z" fill="#b0b0b0" stroke="none" />
      </Icon>
      <div className="-mt-px ml-[16px] h-[23px] w-[78px] rounded-b-[3px] bg-white text-center text-[12px] leading-[25px] font-bold tracking-[-0.1px] text-[#1a8048] shadow-[0_1px_1px_#999]">
        Sheet1
      </div>
      <Icon w={10} h={10} className="mt-[7px] ml-[15px]">
        <path d="M5 0V10M0 5H10" stroke="#444" strokeWidth="1.5" />
      </Icon>
      <Divider className="ml-[13px] h-[21px]" />
    </div>
  );
}

function StatusBar() {
  return (
    <div className="flex grow items-center pb-[2px] text-[12px] text-[#666]">
      <div className="ml-[24px] w-[57px] tracking-[-0.05px]">Ready</div>
      <Icon w={16} h={17}>
        <circle cx="7.2" cy="2.4" r="1.8" stroke="#555" />
        <path d="M1.2 1.8Q0 3 1.4 3.6L5 5.4V9L3.2 14Q3.2 15.6 4.6 15.2L6.6 11.2M13.2 1.8Q14.4 3 13 3.6L9.4 5.4V7.4M1.2 1.8L5 4.4Q7.2 5.4 9.4 4.4L13.2 1.8" stroke="#555" />
        <circle cx="11" cy="12.2" r="4.6" fill="#555" stroke="none" />
        <path d="M8.8 12.2L10.5 13.9L13.4 10.8" stroke="#fff" strokeWidth="1.2" />
      </Icon>
      <div className="ml-[5px] tracking-[-0.02px]">Accessibility: Good to go</div>
      <div className="ml-auto flex h-[22px] w-[31px] items-center justify-center rounded-[3px] bg-[#bababa]">
        <Icon w={14} h={14} className="-ml-px">
          <rect x="0" y="0" width="14" height="14" rx="2" fill="#333" stroke="none" />
          <path d="M4.7 0V14M9.3 0V14M0 4.7H14M0 9.3H14" stroke="#bababa" strokeWidth="0.9" />
        </Icon>
      </div>
      <Icon w={12} h={16} className="ml-[15px]">
        <path d="M2 0.8H7.8L11.4 4.4V14Q11.4 15.3 10.2 15.3H1.8Q0.6 15.3 0.6 14V2Q0.6 0.8 2 0.8ZM7.6 0.8V4.6H11.4" stroke="#555" />
        <path d="M2.6 7.5H9.4V12.9H2.6ZM2.6 10.2H9.4M5 7.5V12.9" stroke="#555" strokeWidth="0.9" />
      </Icon>
      <Icon w={16} h={17} className="ml-[22px]">
        <path d="M2.4 0.5V4.2Q2.4 5.2 3.4 5.2H12.6Q13.6 5.2 13.6 4.2V0.5M2.4 16.5V12.2Q2.4 11.2 3.4 11.2H12.6Q13.6 11.2 13.6 12.2V16.5" stroke="#555" />
        <path d="M0 8.2H16" stroke="#888" strokeDasharray="1.6 1.2" />
      </Icon>
      <div className="ml-[17px] h-[1.5px] w-[8px] bg-[#888]" />
      <div className="ml-[7px] flex h-4 w-[100px] items-center">
        <div className="h-[4px] w-[46px] rounded-l-full bg-[#ababab]" />
        <div className="size-4 shrink-0 rounded-full bg-white shadow-[0_0_2px_#777]" />
        <div className="h-[4px] grow rounded-r-full bg-[#ababab]" />
      </div>
      <Icon w={8} h={8} className="ml-[7px]">
        <path d="M4 0V8M0 4H8" stroke="#777" strokeWidth="1.2" />
      </Icon>
      <div className="ml-[17px] w-[56px] text-[12px]">130%</div>
    </div>
  );
}

export default function App() {
  return (
    <div className="h-[885px] w-[1512px] overflow-hidden bg-[#b9bcc4]">
      <div className="relative flex h-full w-full flex-col overflow-hidden rounded-[9px] bg-[#f5f5f5] font-['Inter','Noto_Sans_CJK_SC',sans-serif]">
        <TitleBar />
        <MenuTabs />
        <Ribbon />
        <FormulaBar />
        <ColumnHeaders />
        <div className="flex h-[636px] shrink-0 flex-col overflow-hidden bg-white">
          {Array.from({ length: ROW_COUNT }, (_, i) => (
            <SheetRow key={i} index={i + 1} />
          ))}
        </div>
        <SheetTabs />
        <StatusBar />
        <Annotations />
      </div>
    </div>
  );
}
